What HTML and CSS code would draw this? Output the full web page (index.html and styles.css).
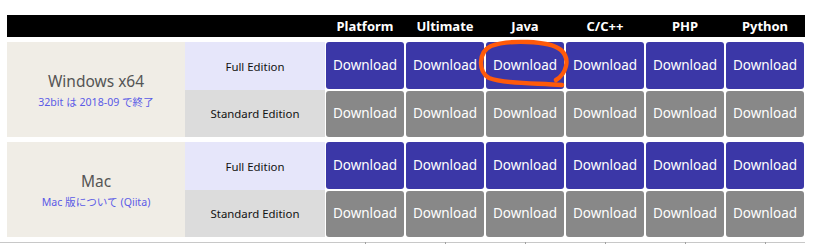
FILE: index.html
```html
<!DOCTYPE html>
<html lang="ja">
<head>
<meta charset="utf-8">
<title>Download</title>
<link rel="stylesheet" href="styles.css">
</head>
<body>
<div class="page">
  <div class="dl-table">
    <div class="head">
      <span></span><span></span>
      <span class="col">Platform</span>
      <span class="col">Ultimate</span>
      <span class="col">Java</span>
      <span class="col">C/C++</span>
      <span class="col">PHP</span>
      <span class="col">Python</span>
    </div>

    <div class="group">
      <div class="os">
        <span class="os-name">Windows x64</span>
        <a class="os-note">32bit は 2018-09 で終了</a>
      </div>
      <div class="ed full">Full Edition</div>
      <div class="cell full"><a class="btn blue">Download</a></div>
      <div class="cell full"><a class="btn blue">Download</a></div>
      <div class="cell full"><a class="btn blue">Download</a></div>
      <div class="cell full"><a class="btn blue">Download</a></div>
      <div class="cell full"><a class="btn blue">Download</a></div>
      <div class="cell full"><a class="btn blue">Download</a></div>
      <div class="ed std">Standard Edition</div>
      <div class="cell std"><a class="btn gray">Download</a></div>
      <div class="cell std"><a class="btn gray">Download</a></div>
      <div class="cell std"><a class="btn gray">Download</a></div>
      <div class="cell std"><a class="btn gray">Download</a></div>
      <div class="cell std"><a class="btn gray">Download</a></div>
      <div class="cell std"><a class="btn gray">Download</a></div>
    </div>

    <div class="group">
      <div class="os">
        <span class="os-name">Mac</span>
        <a class="os-note">Mac 版について (Qiita)</a>
      </div>
      <div class="ed full">Full Edition</div>
      <div class="cell full"><a class="btn blue">Download</a></div>
      <div class="cell full"><a class="btn blue">Download</a></div>
      <div class="cell full"><a class="btn blue">Download</a></div>
      <div class="cell full"><a class="btn blue">Download</a></div>
      <div class="cell full"><a class="btn blue">Download</a></div>
      <div class="cell full"><a class="btn blue">Download</a></div>
      <div class="ed std">Standard Edition</div>
      <div class="cell std"><a class="btn gray">Download</a></div>
      <div class="cell std"><a class="btn gray">Download</a></div>
      <div class="cell std"><a class="btn gray">Download</a></div>
      <div class="cell std"><a class="btn gray">Download</a></div>
      <div class="cell std"><a class="btn gray">Download</a></div>
      <div class="cell std"><a class="btn gray">Download</a></div>
    </div>
  </div>

  <div class="rule">
    <span class="tick"></span><span class="tick"></span><span class="tick"></span>
    <span class="tick"></span><span class="tick"></span><span class="tick"></span>
  </div>

  <svg class="mark" width="816" height="244" viewBox="0 0 816 244" aria-hidden="true">
    <path d="M556 80 C566 74 571 59 561 50 C549 40 507 40 491 46 C478 52 478 72 489 78 C504 84 536 83 562 85" fill="none" stroke="#ff5a0a" stroke-width="4.4" stroke-linecap="round" stroke-linejoin="round"/>
  </svg>
</div>
</body>
</html>
```

FILE: styles.css
```css
html, body {
  margin: 0;
  padding: 0;
  background: #ffffff;
}

.page {
  position: relative;
  width: 816px;
  height: 244px;
  padding: 15px 0 0 7px;
  box-sizing: border-box;
  font-family: "Noto Sans", "Noto Sans CJK JP", sans-serif;
  overflow: hidden;
}

.dl-table {
  width: 798px;
  display: flex;
  flex-direction: column;
  gap: 5px;
}

.head {
  display: grid;
  grid-template-columns: 178px 140px repeat(6, 80px);
  height: 22px;
  background: #000000;
}

.col {
  display: flex;
  align-items: center;
  justify-content: center;
  color: #ffffff;
  font-weight: 700;
  font-size: 13px;
  line-height: 1;
  padding-top: 1px;
}

.group {
  display: grid;
  grid-template-columns: 178px 140px repeat(6, 80px);
  grid-template-rows: 48px 47px;
}

.os {
  grid-row: span 2;
  background: #f0ede6;
  display: flex;
  flex-direction: column;
  align-items: center;
  justify-content: center;
  gap: 4px;
}

.os-name {
  font-size: 15.5px;
  line-height: 20px;
  color: #555555;
}

.os-note {
  font-size: 10.6px;
  line-height: 14px;
  color: #5b5be6;
}

.ed {
  display: flex;
  align-items: center;
  justify-content: center;
  font-size: 11.4px;
  color: #111111;
}

.ed.full {
  background: #e6e6fa;
}

.ed.std {
  background: #dcdcdc;
}

.cell {
  display: flex;
}

.cell.full {
  padding: 0 1px 1px;
}

.cell.std {
  padding: 1px 1px 0;
}

.btn {
  flex: 1;
  display: flex;
  align-items: center;
  justify-content: center;
  border-radius: 3px;
  color: #ffffff;
  font-size: 13.5px;
  padding-bottom: 2px;
}

.btn.blue {
  background: #3b37a7;
}

.btn.gray {
  background: #888888;
}

.rule {
  position: relative;
  margin: 5px 0 0 -7px;
  width: 805px;
  height: 1px;
  background: #c8c8c8;
  display: flex;
  padding-left: 365px;
  box-sizing: border-box;
  gap: 79px;
}

.tick {
  width: 1px;
  height: 3px;
  background: #a0a0a0;
}

.mark {
  position: absolute;
  left: 0;
  top: 0;
  pointer-events: none;
}
```
